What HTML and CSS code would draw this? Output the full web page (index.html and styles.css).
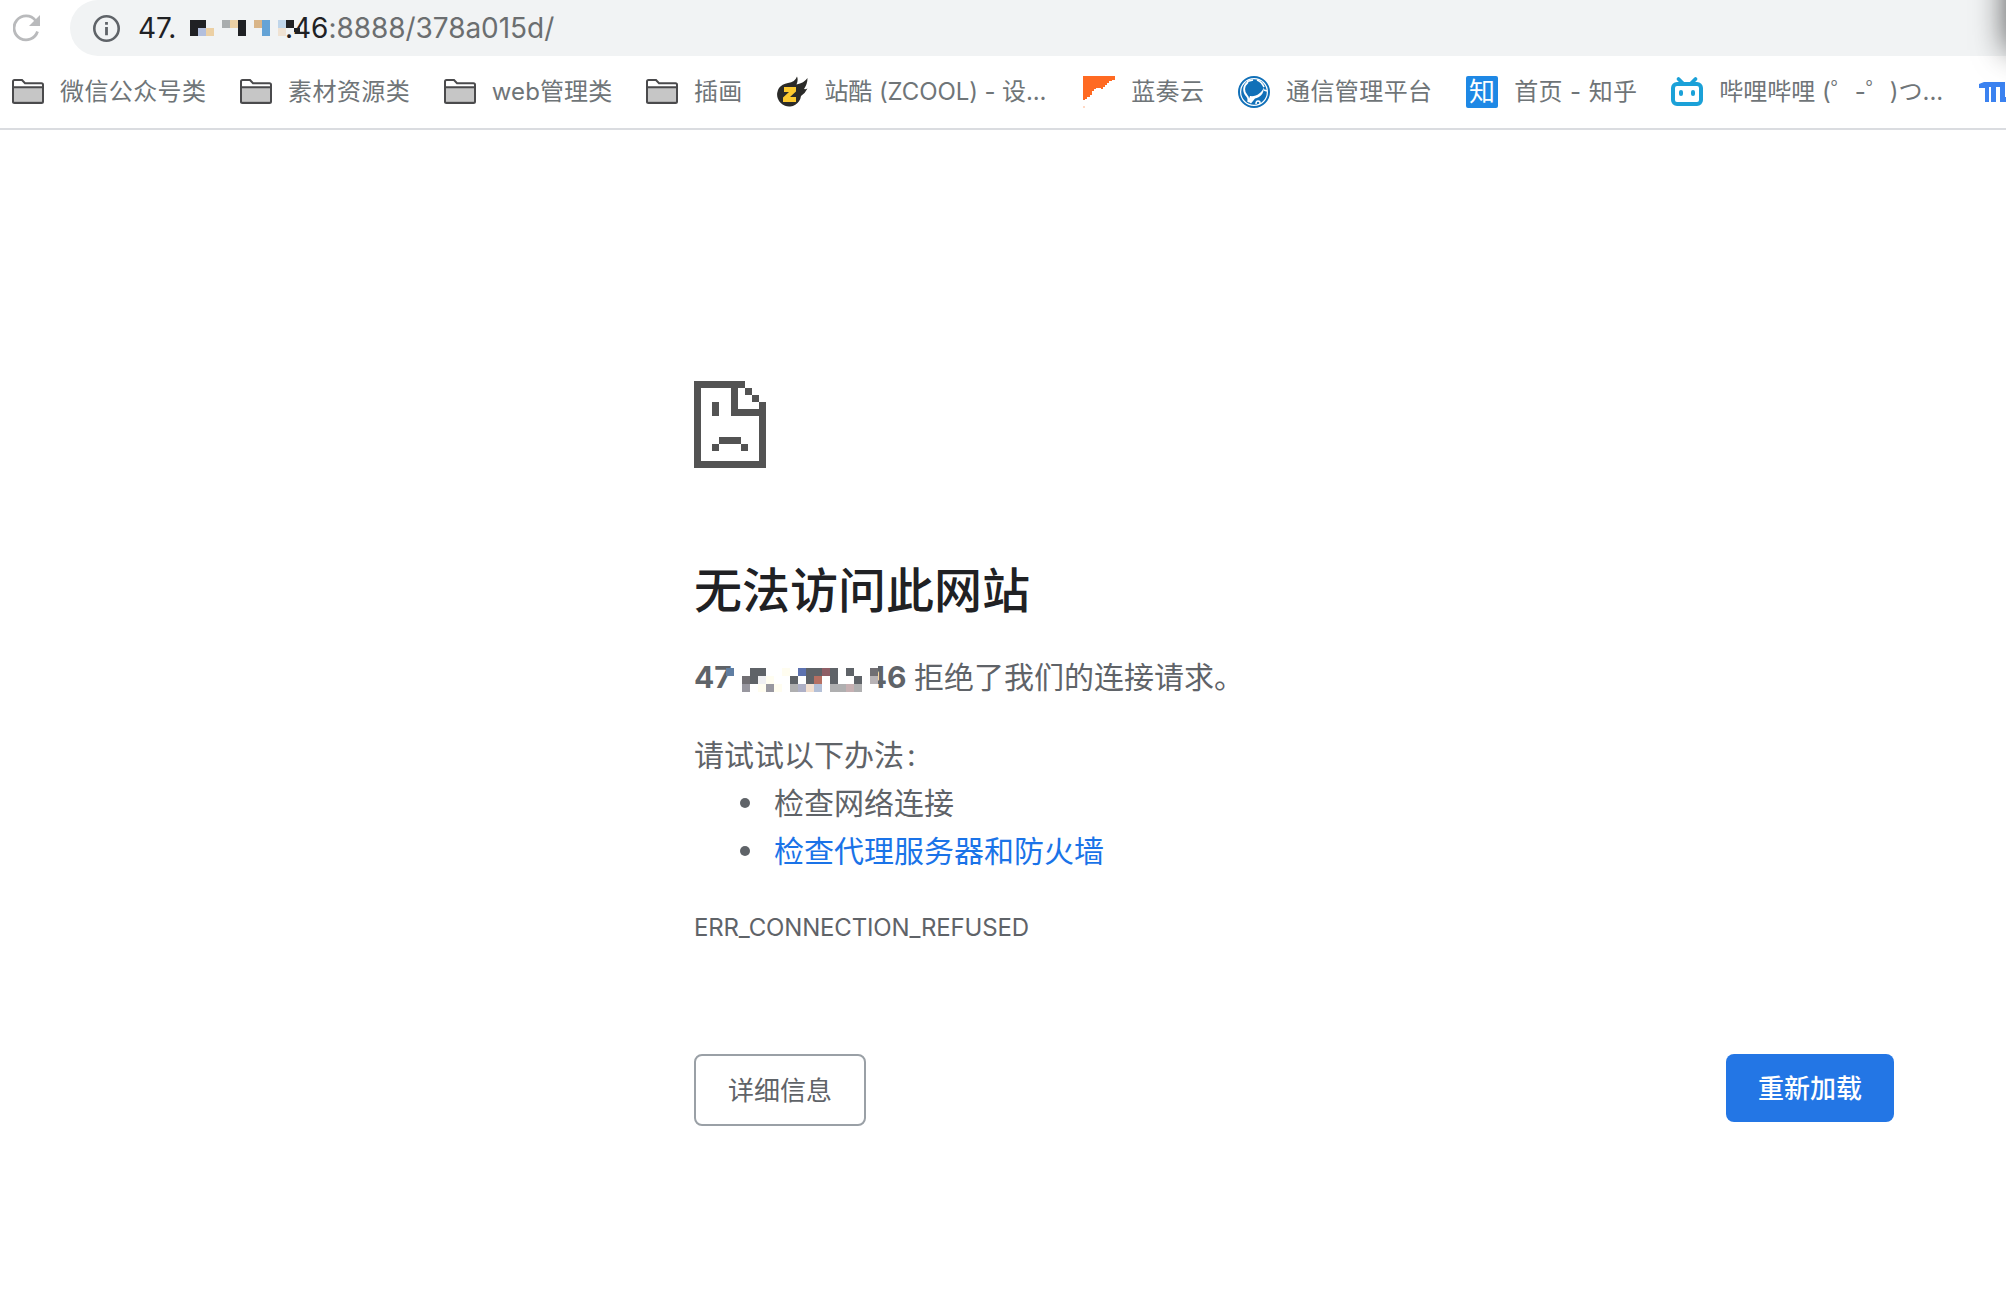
FILE: index.html
```html
<!DOCTYPE html>
<html lang="zh-CN">
<head>
    <meta charset="utf-8">
    <title>47.46:8888</title>
    <link rel="stylesheet" href="styles.css">
</head>
<body>

    <!-- folder icon, used by the bookmarks -->
    <svg class="defs" width="0" height="0">
        <symbol id="folder" viewBox="0 0 32 32">
            <path d="M1 26V5.500Q1 4 2.500 4H10l3 3.200h17q1 0 1 1V26q0 2-1.500 2h-27Q1 28 1 26z" fill="#fff"/>
            <path d="M1 11.500h30V27H1z" fill="#c6c6c6"/>
            <path d="M1 25.300h30V27H1z" fill="#a5a5a5"/>
            <path d="M1 26.500V5.500Q1 4 2.500 4H10l3 3.200h16.500q1.500 0 1.500 1.500v16.800q0 1.500-1.500 1.500h-27Q1 27 1 25.500M1 11.300h30" fill="none" stroke="#4a4a4c" stroke-width="2"/>
        </symbol>
    </svg>

    <div class="toolbar">
        <svg class="reload-icon" width="28" height="28" viewBox="0 0 28 28">
            <path d="M22.500 6.500A12 12 0 1 0 24.500 17.500" fill="none" stroke="#b9babc" stroke-width="2.800"/>
            <path d="M27 1v11H16z" fill="#b9babc"/>
        </svg>
        <div class="omnibox">
            <svg class="info-icon" width="28" height="28" viewBox="0 0 28 28">
                <circle cx="14.500" cy="14.500" r="12.200" fill="none" stroke="#5f6368" stroke-width="2.600"/>
                <path d="M13.100 8h2.800v2.800h-2.800zM13.100 13h2.800v8.200h-2.800z" fill="#5f6368"/>
            </svg>
            <div class="url">
                <span class="host">47.</span>
                <svg class="url-mosaic" width="112" height="16" viewBox="0 0 14 2" shape-rendering="crispEdges">
                    <path d="M0 0h2v1H1v1H0zM6 0h1v2H6zM12 0h1v1h.7v.5H13V1h-1z" fill="#202124"/>
                    <path d="M1 1h1v1H1z" fill="#b3bfdd"/>
                    <path d="M2 1h1v1H2zM5 0h1v1H5z" fill="#ecd0a4"/>
                    <path d="M4 0h1v1H4z" fill="#a9adae"/>
                    <path d="M8 0h1v1H8z" fill="#d9b588"/>
                    <path d="M9 0h1v2H9z" fill="#64a3d6"/>
                    <path d="M11 0h1v1h-1z" fill="#bfd5ea"/>
                    <path d="M11 1h1v1h-1z" fill="#efe2d3"/>
                </svg>
                <span class="host host-end">.46</span><span>:8888/378a015d/</span>
            </div>
        </div>
    </div>

    <nav class="bookmarks">
        <a><svg width="32" height="32"><use href="#folder"/></svg>微信公众号类</a>
        <a><svg width="32" height="32"><use href="#folder"/></svg>素材资源类</a>
        <a class="web"><svg width="32" height="32"><use href="#folder"/></svg>web管理类</a>
        <a><svg width="32" height="32"><use href="#folder"/></svg>插画</a>
        <a class="zcool">
            <svg width="32" height="32" viewBox="0 0 32 32">
                <path d="M3 12Q6 8 12 7q7-1 9-6.500Q22.500 4 20.500 8.500 28 7 31.500 2q0 6-3.500 11 1.500 .5 3.500-.5-2.500 5-6.500 7.500A12 12 0 1 1 3 12z" fill="#2b2b29"/>
                <path d="M8 11h12v4.500L14 21h6v5H7v-4.500L13 16H8z" fill="#fcc92f"/>
            </svg>
            <span>站酷 (ZCOOL) - 设...</span>
        </a>
        <a>
            <svg width="32" height="32" viewBox="0 0 32 32">
                <path d="M0 0h32v4h-3v1h-3v2h-2v2h-2v2h-2v2h-2v-1h-5v1h-2v2H9v4H7v2H4v2H2v1H0z" fill="#ff6a22"/>
                <path d="M0 30h2v2H0z" fill="#ffd9c6"/>
            </svg>蓝奏云</a>
        <a>
            <svg width="32" height="32" viewBox="0 0 32 32">
                <circle cx="16" cy="16" r="15" fill="#fff" stroke="#1170b8" stroke-width="2"/>
                <circle cx="16" cy="16" r="12.800" fill="#1170b8"/>
                <path d="M10 26c1-2 0-5-1-6-4-4-4-10 1-14" fill="none" stroke="#fff" stroke-width="1.800"/>
                <path d="M9 5.500l6-1.500M19 4q5 2 7 7" fill="none" stroke="#fff" stroke-width="1.600"/>
                <path d="M12 20c6 1 12-3 14-9 0 7-4 10.500-9 11.500l-4 5-3-2z" fill="#fff"/>
                <path d="M18 28q0-3 2-3 2.500 0 2 3M26 14l3 1" fill="none" stroke="#fff" stroke-width="1.500"/>
            </svg>通信管理平台</a>
        <a><i class="zhihu">知</i>首页 - 知乎</a>
        <a class="bili">
            <svg width="32" height="32" viewBox="0 0 32 32">
                <path d="M7.500 3l5 5M24.500 3l-5 5" stroke="#1ba1d8" stroke-width="3.800" stroke-linecap="round"/>
                <rect x="2" y="8" width="28" height="20" rx="4" fill="#fff" stroke="#1ba1d8" stroke-width="4"/>
                <rect x="8" y="14" width="4" height="6" rx="2" fill="#1ba1d8"/>
                <rect x="20" y="14" width="4" height="6" rx="2" fill="#1ba1d8"/>
            </svg>
            <span>哔哩哔哩 (゜-゜)つ...</span>
        </a>
        <a>
            <svg width="32" height="32" viewBox="0 0 32 32">
                <path d="M0 8l5-2h21v15h6v5H21V11h-4v15h-5V11h-2v15H6V12H0z" fill="#3b82f0"/>
            </svg>
        </a>
    </nav>

    <div class="edge-shadow"></div>

    <main>
        <svg class="sad-file" width="72" height="87" viewBox="42 33 216 261" shape-rendering="crispEdges" fill="#535353">
            <path d="M42 33h153v21H42zM42 33h21v261H42zM42 273h216v21H42zM237 96h21v198h-21z"/>
            <path d="M153 33h21v105h-21zM153 117h105v21H153zM195 54h21v21h-21zM216 75h21v21h-21z"/>
            <path d="M96 96h21v42H96zM117 201h66v21h-66zM96 222h21v21H96zM183 222h21v21h-21z"/>
        </svg>

        <h1>无法访问此网站</h1>

        <p class="summary">
            <strong>47<svg class="ip-mosaic" width="152" height="28" viewBox="0 -.25 19 3.500" shape-rendering="crispEdges">
                <path d="M1-.25h18v3.500H1z" fill="#fff"/>
                <path d="M3 0h2v1H4v1H3zM10 0h2v1h-1v1h-1zM13 0h1v2h-1zM15 0h1v1h-1zM8 1h1v1H8zM16 1h1v1h-1z" fill="#5f6368"/>
                <path d="M2 1h1v1H2zM18 0h1v1h-1z" fill="#716f73"/>
                <path d="M0 0h1v1H0z" fill="#5f7ea3"/>
                <path d="M9 0h1v1H9z" fill="#5d72b0"/>
                <path d="M12 0h1v1h-1z" fill="#8f5f66"/>
                <path d="M11 1h1v1h-1z" fill="#b66f62"/>
                <path d="M4 1h1v1H4z" fill="#f0f0f2"/>
                <path d="M7 0h1v1H7zM5 1h1v1H5zM4 2h1v1H4zM6 2h1v1H6z" fill="#fffdf0"/>
                <path d="M2 2h1v1H2zM5 2h1v1H5z" fill="#98979f"/>
                <path d="M8 2h1v1H8zM13 2h2v1h-2zM16 2h1v1h-1z" fill="#afafb0"/>
                <path d="M9 2h1v1H9z" fill="#aeb0c6"/>
                <path d="M10 2h1v1h-1z" fill="#f2dfd0"/>
                <path d="M11 2h1v1h-1z" fill="#b3bfd6"/>
                <path d="M15 2h1v1h-1z" fill="#c6b0b2"/>
                <path d="M18 1h1v1h-1z" fill="#b8b3b6"/>
            </svg><span>46</span></strong>拒绝了我们的连接请求。
        </p>

        <p class="try">请试试以下办法<span class="colon">:</span></p>
        <ul>
            <li>检查网络连接</li>
            <li><a>检查代理服务器和防火墙</a></li>
        </ul>

        <div class="error-code">ERR_CONNECTION_REFUSED</div>

        <div class="buttons">
            <button class="details">详细信息</button>
            <button class="reload">重新加载</button>
        </div>
    </main>

</body>
</html>
```
FILE: styles.css
```css
* {
    box-sizing: border-box;
}

body {
    margin: 0;
    height: 1296px;
    overflow: hidden;
    background: #fff;
    color: #5f6368;
    font-family: Inter, "Noto Sans CJK SC", sans-serif;
}

svg {
    display: block;
    flex: none;
}

.defs {
    position: absolute;
}

/* toolbar */
.toolbar {
    display: flex;
    align-items: center;
    height: 56px;
    padding-left: 13px;
}

.omnibox {
    flex: 1;
    display: flex;
    align-items: center;
    height: 56px;
    margin-left: 29px;
    padding-left: 22px;
    border-radius: 28px 0 0 28px;
    background: #f1f3f4;
}

.url {
    display: flex;
    align-items: center;
    margin-left: 18px;
    font-size: 28px;
    letter-spacing: -0.05px;
    line-height: 56px;
    color: #6b6e70;
}

.host {
    width: 52px;
    color: #202124;
}

.host-end {
    width: auto;
    margin-left: -17px;
}

/* bookmarks */
.bookmarks {
    display: flex;
    align-items: center;
    gap: 33.7px;
    height: 74px;
    padding-left: 12px;
    border-bottom: 2px solid #dadce0;
    font-size: 24px;
    letter-spacing: 0.4px;
    line-height: 32px;
    white-space: nowrap;
    color: #6f7578;
}

.bookmarks a {
    display: flex;
    flex: none;
    align-items: center;
    gap: 16px;
    height: 32px;
}

.bookmarks .web {
    letter-spacing: 0.1px;
}

.zcool span {
    width: 225px;
    letter-spacing: -0.1px;
}

.bili span {
    width: 226px;
    letter-spacing: 0;
}

.zhihu {
    width: 32px;
    height: 32px;
    border-radius: 2px;
    background: #1e88e5;
    color: #fff;
    font-size: 26px;
    font-style: normal;
    line-height: 31px;
    text-align: center;
}

/* shadow of the window lying to the right */
.edge-shadow {
    position: absolute;
    top: -40px;
    left: 2006px;
    width: 40px;
    height: 90px;
    box-shadow: 0 0 32px rgba(0, 0, 0, 0.65);
}

/* error page */
main {
    width: 1200px;
    margin: 251px 0 0 694px;
    font-size: 30px;
    line-height: 48px;
}

h1 {
    margin: 93px 0 0;
    color: #202124;
    font-size: 48px;
    font-weight: 500;
    line-height: 60px;
}

.summary {
    display: flex;
    margin: 32px 0 0;
}

strong {
    display: flex;
    align-items: center;
    width: 220px;
    font-weight: 700;
}

.ip-mosaic {
    position: relative;
    margin: 5px -11px 0 -6px;
}

.try {
    margin: 30px 0 0;
}

.colon {
    margin-left: 3px;
}

ul {
    margin: 0;
    padding-left: 80px;
    list-style: none;
}

li {
    display: flex;
    align-items: center;
}

li::before {
    content: "";
    width: 10px;
    height: 10px;
    margin: 0 24px 0 -34px;
    border-radius: 50%;
    background: #5f6368;
}

main a {
    color: #1a73e8;
}

.error-code {
    margin-top: 29px;
    font-size: 24px;
    letter-spacing: -0.16px;
}

.buttons {
    display: flex;
    align-items: flex-start;
    justify-content: space-between;
    margin-top: 102px;
}

button {
    padding: 0 0 3px;
    border: none;
    border-radius: 8px;
    font-family: inherit;
    font-size: 26px;
}

.details {
    width: 172px;
    height: 72px;
    border: 2px solid #9aa0a6;
    background: #fff;
    color: #5f6368;
}

.reload {
    width: 168px;
    height: 68px;
    background: #2376e5;
    color: #fff;
    font-weight: 500;
}
```
